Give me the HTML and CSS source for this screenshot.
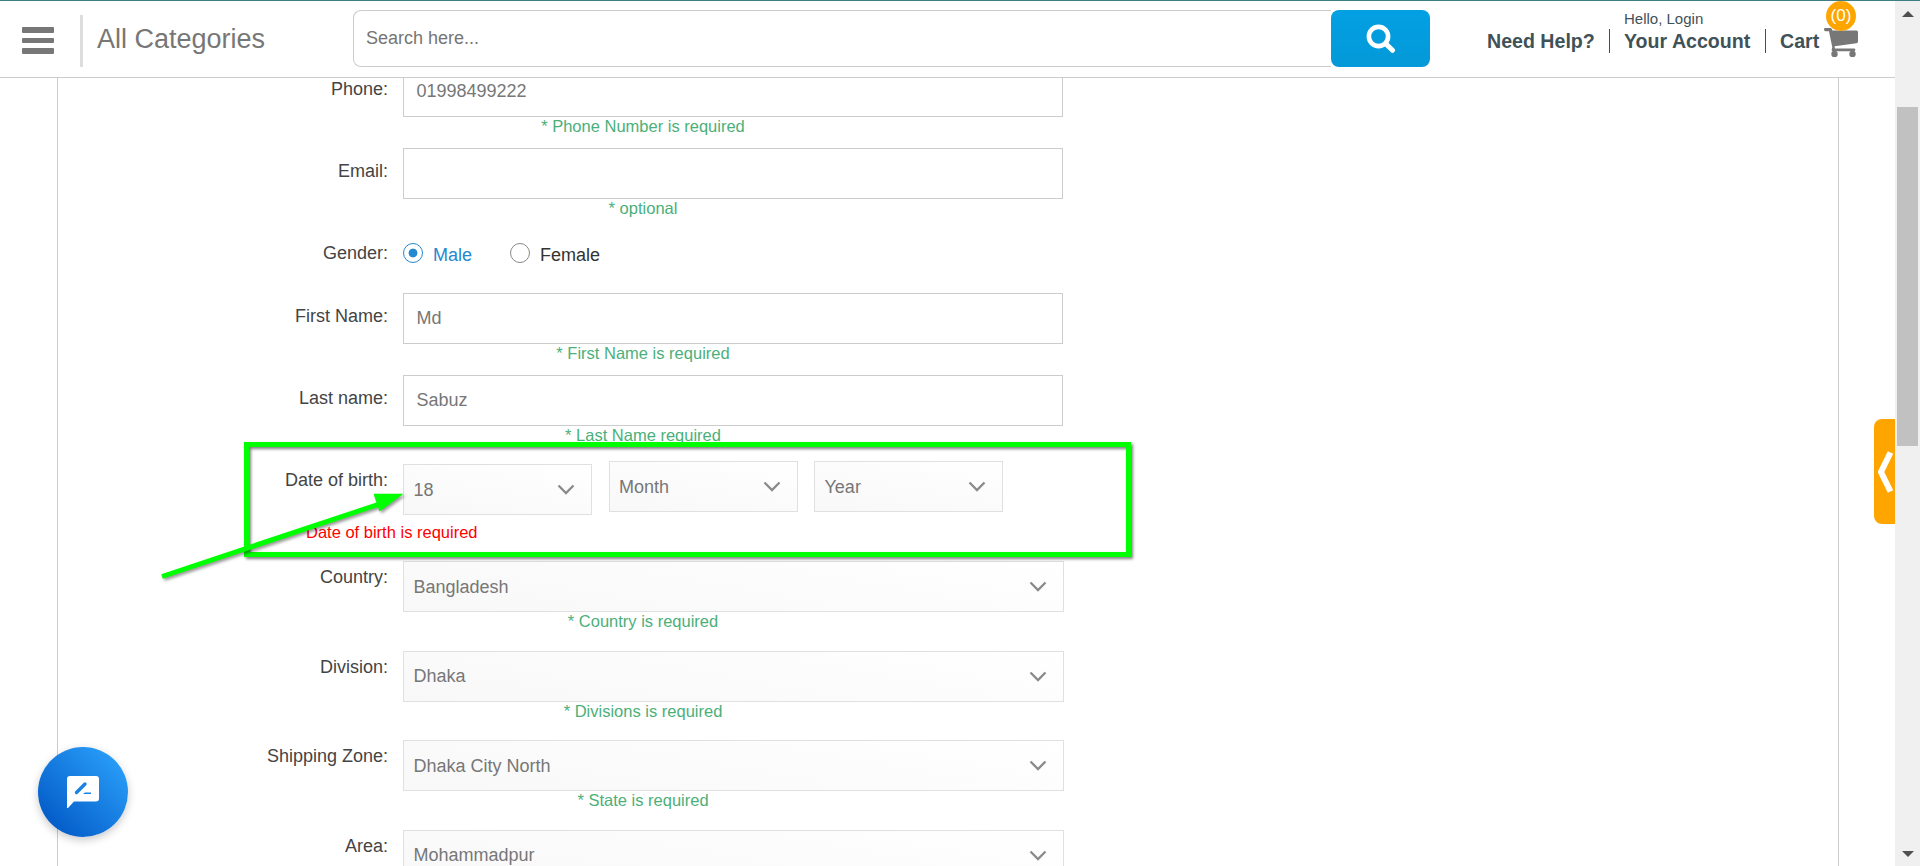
FILE: index.html
```html
<!DOCTYPE html>
<html lang="en">
<head>
<meta charset="utf-8">
<title>Account details</title>
<link rel="stylesheet" href="styles.css">
</head>
<body>
<svg class="defs" aria-hidden="true">
  <symbol id="chev" viewBox="0 0 18 11"><path d="M1.5 1.5L9 9L16.5 1.5" fill="none" stroke="#8a8a8a" stroke-width="2.3"/></symbol>
</svg>
<div class="app">
  <div class="page">
    <header class="header">
      <div class="menu"><i></i><i></i><i></i></div>
      <div class="categories">All Categories</div>
      <div class="search">
        <div class="search-text">Search here...</div>
        <div class="search-btn">
          <svg width="30" height="30" viewBox="0 0 30 30" fill="none" stroke="#fff"><circle cx="12.5" cy="12.5" r="9.6" stroke-width="4.6"/><path d="M19.5 19.5L26.5 26.3" stroke-width="5" stroke-linecap="round"/></svg>
        </div>
      </div>
      <nav class="nav">
        <div class="nav-item help">Need Help?</div>
        <div class="nav-item account"><small>Hello, Login</small>Your Account</div>
        <div class="nav-item cart">Cart
          <svg width="34" height="30" viewBox="0 0 34 30" fill="#777"><path d="M1 0H6.5Q7.8 0 8.1 1.5L8.3 2.5H32.5Q34 2.5 34 4V13.5Q34 15 32.5 15.3L10.5 18.2L11 20.500H30Q31.400 20.500 31.400 21.800T30 23.200H9Q7.600 23.200 7.600 21.700L8.300 19.500L5 3.300H1.500Q0 3.300 0 1.600T1 0Z"/><circle cx="10.500" cy="25.900" r="3.200"/><circle cx="28.500" cy="25.900" r="3.200"/></svg>
          <span class="badge">(0)</span>
        </div>
      </nav>
    </header>
    <main class="panel">
      <div class="row"><label>Phone:</label><div class="field"><div class="input">01998499222</div><div class="hint">* Phone Number is required</div></div></div>
      <div class="row"><label>Email:</label><div class="field"><div class="input"></div><div class="hint">* optional</div></div></div>
      <div class="row gender"><label>Gender:</label><div class="radios"><span class="radio on"><i></i>Male</span><span class="radio"><i></i>Female</span></div></div>
      <div class="row"><label>First Name:</label><div class="field"><div class="input">Md</div><div class="hint">* First Name is required</div></div></div>
      <div class="row"><label>Last name:</label><div class="field"><div class="input">Sabuz</div><div class="hint">* Last Name required</div></div></div>
      <div class="row dob"><label>Date of birth:</label>
        <div class="dates">
          <div class="select day">18<svg><use href="#chev"/></svg></div>
          <div class="select">Month<svg><use href="#chev"/></svg></div>
          <div class="select">Year<svg><use href="#chev"/></svg></div>
        </div>
        <div class="error">Date of birth is required</div>
      </div>
      <div class="row place"><label>Country:</label><div class="field"><div class="select">Bangladesh<svg><use href="#chev"/></svg></div><div class="hint">* Country is required</div></div></div>
      <div class="row place"><label>Division:</label><div class="field"><div class="select">Dhaka<svg><use href="#chev"/></svg></div><div class="hint">* Divisions is required</div></div></div>
      <div class="row place"><label>Shipping Zone:</label><div class="field"><div class="select">Dhaka City North<svg><use href="#chev"/></svg></div><div class="hint">* State is required</div></div></div>
      <div class="row place"><label>Area:</label><div class="field"><div class="select">Mohammadpur<svg><use href="#chev"/></svg></div></div></div>
    </main>
  </div>
  <aside class="scrollbar">
    <svg width="12" height="6" viewBox="0 0 12 6"><path d="M0 6L6 0L12 6Z" fill="#505050"/></svg>
    <div class="thumb"></div>
    <svg class="down" width="12" height="6" viewBox="0 0 12 6"><path d="M0 0H12L6 6Z" fill="#505050"/></svg>
  </aside>
  <div class="side-tab"><svg width="16" height="42" viewBox="0 0 16 42"><path d="M12.5 1.5L3 21L12.5 40.5" fill="none" stroke="#fff" stroke-width="6"/></svg></div>
  <div class="chat">
    <svg width="32" height="32" viewBox="0 0 32 32"><path d="M3 0H29Q32 0 32 3V22.5Q32 25.5 29 25.5H7L1 32Q0 32.5 0 31V3Q0 0 3 0Z" fill="#fff"/><path d="M9.5 16.5L18 8" stroke="#1a82e2" stroke-width="3.4" stroke-linecap="round"/><path d="M16 18L18 16.5H24V18Z" fill="#1a82e2"/></svg>
  </div>
  <div class="mark"></div>
  <svg class="arrow" width="250" height="94" viewBox="0 0 250 94"><path d="M2 87.5L218 15.5" stroke="#0f0" stroke-width="5"/><path d="M243.5 4.800H213.500L219.500 22.500Z" fill="#0f0"/></svg>
</div>
</body>
</html>
```

FILE: styles.css
```css
* { box-sizing: border-box; }
body { margin: 0; background: #fff; color: #444; font: 18px/22px "Liberation Sans", Arial, sans-serif; overflow: hidden; }
.defs { display: none; }
.app { position: relative; display: flex; height: 866px; border-top: 1px solid #3d7f85; overflow: hidden; }
.page { width: 1895px; display: flex; flex-direction: column; overflow: hidden; }

.header { position: relative; z-index: 1; flex: none; height: 77px; display: flex; background: #fff; border-bottom: 1px solid #ccc; }
.menu { width: 32px; margin: 26px 26px 0 22px; display: flex; flex-direction: column; gap: 5px; }
.menu i { height: 5.5px; border-radius: 1px; background: #777; }
.categories { width: 273px; height: 52px; margin-top: 14px; padding-left: 14px; border-left: 3px solid #ddd; font-size: 27px; line-height: 48px; color: #777; }
.search { width: 1077px; height: 57px; margin-top: 9px; display: flex; }
.search-text { flex: 1; padding-left: 12px; border: 1px solid #ccc; border-right: 0; border-radius: 8px 0 0 8px; line-height: 54px; color: #757575; }
.search-btn { width: 99px; border-radius: 8px; background: linear-gradient(#02a0e3, #0499d8); display: flex; align-items: center; justify-content: center; }
.nav { display: flex; margin: 28px 0 0 57px; height: 24px; color: #3f5258; font-weight: bold; font-size: 19.6px; line-height: 25px; white-space: nowrap; }
.nav-item { position: relative; }
.help { width: 123px; border-right: 1px solid #3f5258; }
.account { width: 156px; padding-left: 14px; border-right: 1px solid #3f5258; }
.account small { position: absolute; left: 14px; top: -23px; font-size: 15px; font-weight: normal; }
.cart { padding-left: 14px; }
.cart svg { position: absolute; left: 58px; top: -1px; }
.badge { position: absolute; left: 60px; top: -28px; width: 30px; height: 30px; border-radius: 50%; background: orange; color: #fff; font-size: 17px; font-weight: normal; line-height: 29px; text-align: center; }

.panel { flex: 1; margin-left: 57px; width: 1782px; border: solid #ccc; border-width: 0 1px; min-height: 0; }
.row { display: grid; grid-template-columns: 330px 662px; column-gap: 15px; height: 82px; align-items: start; align-content: start; }
.row:first-child { margin-top: -12px; }
.row label { padding-top: 12px; text-align: right; }
.field { display: flex; flex-direction: column; }
.input { width: 660px; height: 51px; border: 1px solid #ccc; padding-left: 12.5px; line-height: 49px; color: #777; }
.hint { width: 480px; text-align: center; color: #4caf7a; font-size: 16.5px; line-height: 18px; }
.gender { height: 63px; }
.radios { display: flex; gap: 38px; padding-top: 13px; color: #333; }
.radio { display: flex; gap: 10px; line-height: 24px; }
.radio i { width: 20px; height: 20px; border: 1px solid #888; border-radius: 50%; }
.radio.on { color: #2489ce; }
.radio.on i { border-color: #2489ce; background: radial-gradient(circle, #2489ce 0 4px, #fff 4.8px); }
.dob { height: 97px; }
.dates { display: flex; gap: 16.5px; padding-top: 4px; }
.dates .select { width: 189px; }
.dates .day { margin-top: 3px; }
.error { grid-column: 1 / 3; padding-left: 248px; margin-top: 7px; color: #f00; font-size: 16.5px; line-height: 20px; }
.select { position: relative; height: 51px; border: 1px solid #e0e0e0; padding: 0 16px 0 9.5px; line-height: 48px; color: #777; display: flex; justify-content: space-between; align-items: center; background: linear-gradient(10deg, #f8f8f8, #fff); }
.select svg { width: 18px; height: 11px; }
.field .select { width: 661px; margin-top: 7px; }
.place { height: 89.5px; }

.scrollbar { width: 25px; background: #f0f0f0; display: flex; flex-direction: column; align-items: center; padding-top: 10px; }
.thumb { width: 21px; height: 339px; margin-top: 90px; background: #c1c1c1; }
.down { margin: auto 0 9px; }
.side-tab { position: absolute; left: 1874px; top: 418px; width: 21px; height: 105px; border-radius: 8px 0 0 8px; background: orange; display: flex; align-items: center; padding-left: 4px; }
.chat { position: absolute; left: 38px; top: 746px; width: 90px; height: 90px; border-radius: 50%; background: linear-gradient(45deg, #0055c4 5%, #2ca3fc 95%); box-shadow: 0 3px 8px rgba(0,0,0,.22); display: flex; align-items: center; justify-content: center; }
.mark { position: absolute; left: 244px; top: 441px; width: 887px; height: 115px; border: 5px solid #0f0; filter: drop-shadow(2px 2px 1.5px rgba(0,0,0,.5)); }
.arrow { position: absolute; left: 160px; top: 488px; filter: drop-shadow(2px 2px 1.5px rgba(0,0,0,.4)); }
```
